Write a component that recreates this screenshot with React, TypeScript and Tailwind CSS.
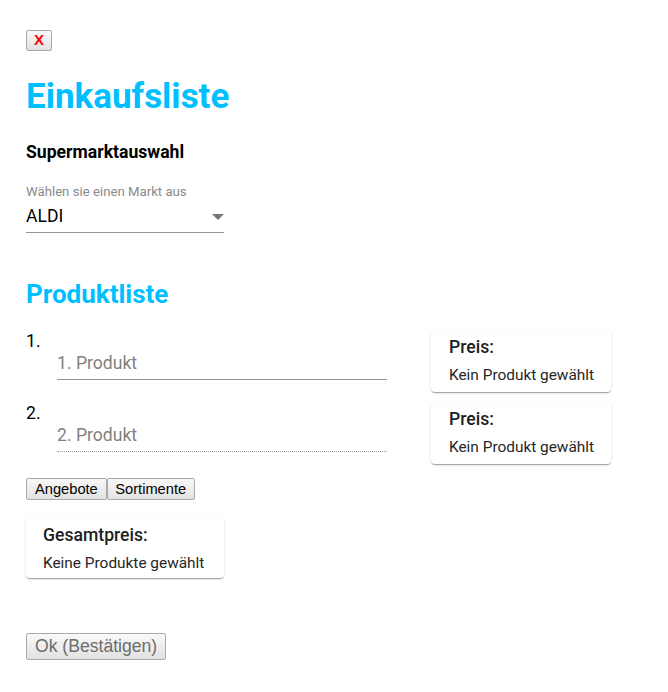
const btn =
  "bg-gradient-to-b from-[#f9f9f9] to-[#e2e2e2] border border-[#a9a9a9] rounded-[2px] font-['Liberation_Sans',Arial,sans-serif] leading-[18px]";

function PriceCard({ title, text, className }: { title: string; text: string; className: string }) {
  return (
    <div
      className={`bg-white rounded-[4px] shadow-[0_2px_1px_-1px_rgba(0,0,0,0.2),0_1px_1px_0_rgba(0,0,0,0.14),0_1px_3px_0_rgba(0,0,0,0.12)] ${className}`}
    >
      <p className="text-[17.6px] font-medium leading-[20px] text-[#212121]">{title}</p>
      <p className="mt-[9px] text-[15.4px] leading-[18px] text-[#262626]">{text}</p>
    </div>
  );
}

function ProductRow({ n, dotted }: { n: number; dotted?: boolean }) {
  return (
    <div className="flex items-start">
      <div className="w-[405px]">
        <div className="text-[17.6px] leading-[20px] text-black">{n}.</div>
        <input
          placeholder={`${n}. Produkt`}
          disabled={dotted}
          className={`ml-[31px] w-[330px] h-[29px] pb-[5px] text-[17.6px] leading-[21px] bg-transparent outline-none placeholder:text-[#857f7f] ${
            dotted ? 'border-b border-dotted border-[#9a9a9a]' : 'border-b border-[#949494]'
          }`}
        />
      </div>
      <PriceCard title="Preis:" text="Kein Produkt gewählt" className="w-[180px] h-[61px] pl-[18px] pt-[6px]" />
    </div>
  );
}

export default function App() {
  return (
    <div className="min-h-screen bg-white pl-[26px] pt-[28px] font-['Roboto',sans-serif]">
      {/* Close */}
      <button className={`${btn} w-[26px] h-[21px] text-[15px] font-bold text-[#ff0000]`}>X</button>

      <h1 className="mt-[24px] text-[35px] font-bold leading-[42px] text-[#00bfff]">Einkaufsliste</h1>

      <h3 className="mt-[24px] text-[17.6px] font-bold leading-[20px] text-black">Supermarktauswahl</h3>

      {/* Market select */}
      <div className="mt-[22px] w-[198px]">
        <p className="text-[13.2px] leading-[15px] text-[#8a8a8a]">Wählen sie einen Markt aus</p>
        <div className="mt-[7px] flex items-center justify-between border-b border-[#949494] pb-[5px]">
          <span className="text-[17.6px] leading-[21px] text-black">ALDI</span>
          <svg width="12" height="6" viewBox="0 0 12 6">
            <path d="M0 0h12L6 6z" fill="#757575" />
          </svg>
        </div>
      </div>

      <h2 className="mt-[45px] text-[26px] font-bold leading-[32px] text-[#00bfff]">Produktliste</h2>

      <div className="mt-[21px] flex flex-col gap-[11px]">
        <ProductRow n={1} />
        <ProductRow n={2} dotted />
      </div>

      <div className="mt-[14px] flex">
        <button className={`${btn} h-[22px] px-[8px] text-[14.67px] text-black`}>Angebote</button>
        <button className={`${btn} h-[22px] px-[7.5px] text-[14.67px] text-black`}>Sortimente</button>
      </div>

      <PriceCard
        title="Gesamtpreis:"
        text="Keine Produkte gewählt"
        className="mt-[18px] w-[198px] h-[60px] pl-[17px] pt-[7px]"
      />

      <button className={`${btn} mt-[55px] h-[27px] px-[8px] text-[17.6px] leading-[21px] text-[#6d6d6d]`}>
        Ok (Bestätigen)
      </button>
    </div>
  );
}
